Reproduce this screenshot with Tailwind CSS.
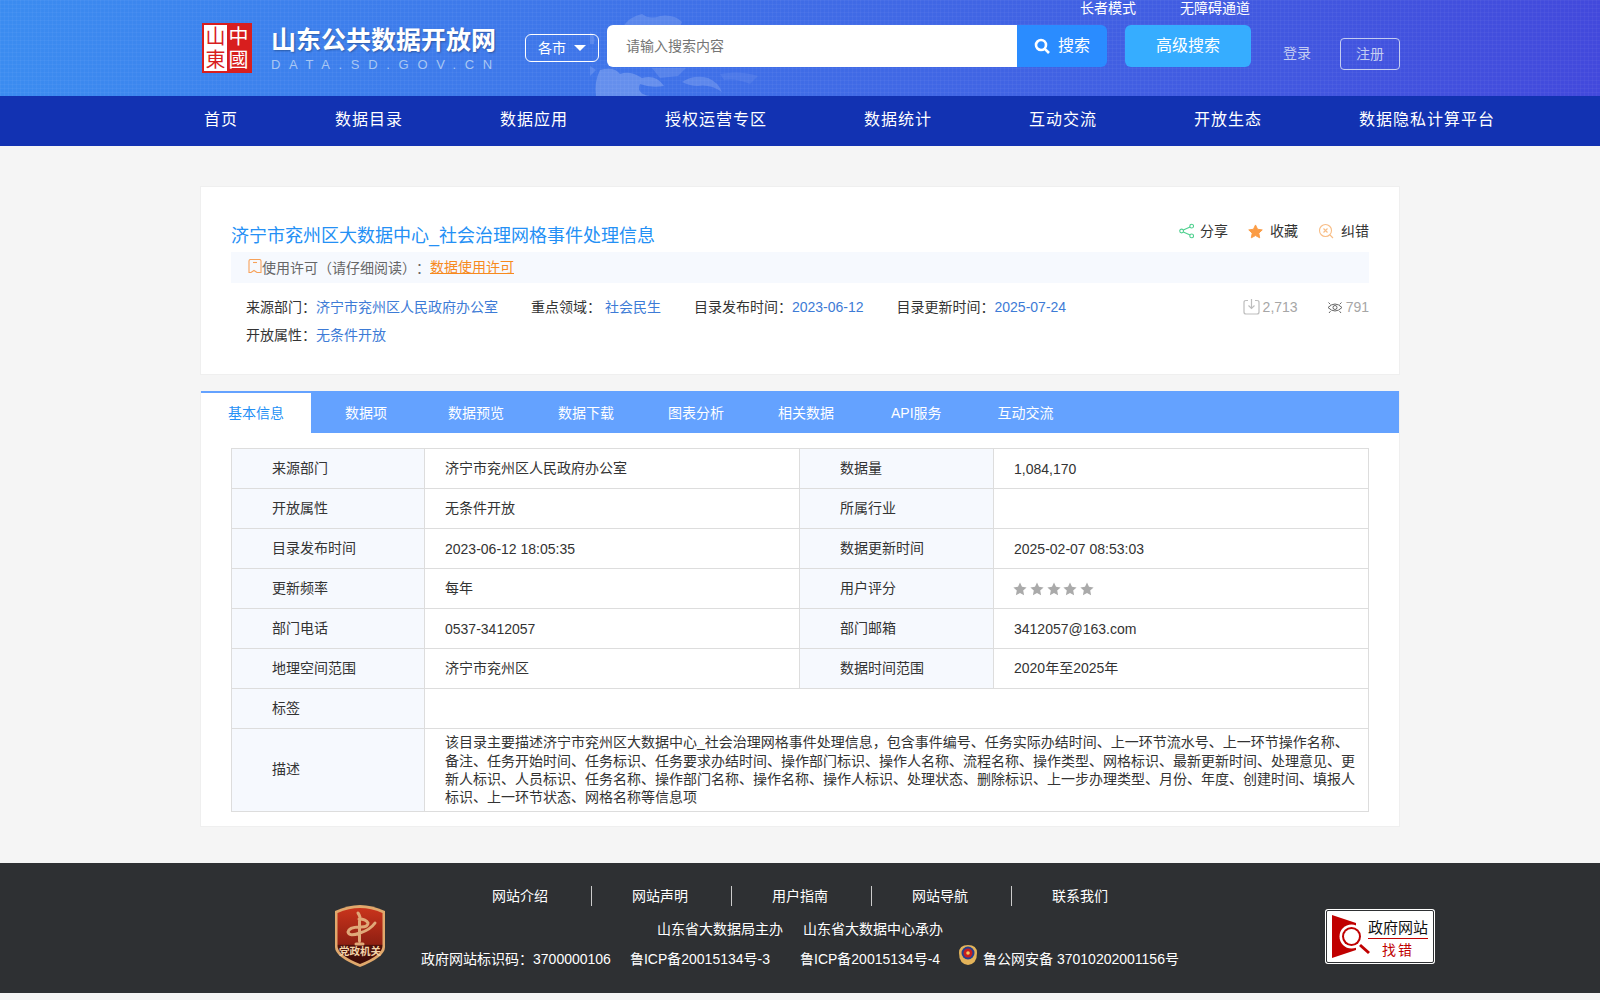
<!DOCTYPE html>
<html lang="zh-CN">
<head>
    <meta charset="UTF-8">
    <title>山东公共数据开放网</title>
    <script src="https://cdn.jsdelivr.net/npm/@tailwindcss/browser@4"></script>
</head>
<body class="bg-[#f5f5f5] text-[14px] text-[#333] [text-spacing-trim:space-all] font-['Liberation_Sans','Noto_Sans_CJK_SC',sans-serif]">
    <!-- header -->
    <header class="relative h-[96px] overflow-hidden bg-gradient-to-r from-[#3b8cf0] to-[#4249dc]">
        <div class="absolute inset-0 bg-[linear-gradient(rgba(255,255,255,.035)_1px,transparent_1px),linear-gradient(90deg,rgba(255,255,255,.035)_1px,transparent_1px)] bg-[length:4px_4px]"></div>
        <!-- faint map behind the search box -->
        <svg class="absolute left-[590px] top-[8px]" width="220" height="88" viewBox="0 0 220 88" fill="#fff">
            <path d="M32 20 Q40 8 52 6 Q60 12 70 8 Q84 6 92 14 Q90 22 78 24 L36 26 Z" opacity=".15"/>
            <path d="M10 62 Q24 58 30 66 Q40 62 52 70 Q66 66 74 78 Q60 80 50 76 Q46 86 60 88 L6 88 Q4 74 10 62 Z" opacity=".2"/>
            <path d="M92 74 Q104 66 118 70 Q128 74 132 84 Q120 76 108 78 Q100 78 92 74 Z" opacity=".16"/>
            <path d="M62 60 L96 60 L88 68 L70 70 Z" opacity=".12"/>
            <path d="M130 66 Q150 62 168 68 L160 76 Q146 70 134 72 Z" opacity=".07"/>
            <path d="M0 24 Q6 28 4 36 L0 36 Z M0 58 L6 62 L0 68 Z" opacity=".14"/>
        </svg>
        <div class="relative w-[1200px] mx-auto h-full">
            <div class="absolute right-[150px] top-0 flex gap-[44px] text-white leading-[17px]">
                <a>长者模式</a>
                <a>无障碍通道</a>
            </div>
            <div class="flex items-start pt-[25px]">
                <!-- logo -->
                <div class="shrink-0 w-[50px] h-[50px] mt-[-2px] ml-[2px] p-[2px] grid grid-cols-2 grid-rows-2 bg-[#d81e1e] text-[20px] leading-none text-center">
                    <span class="flex items-center justify-center bg-white text-[#d81e1e]">山</span>
                    <span class="flex items-center justify-center text-white">中</span>
                    <span class="flex items-center justify-center bg-white text-[#d81e1e]">東</span>
                    <span class="flex items-center justify-center text-white">國</span>
                </div>
                <div class="shrink-0 ml-[19px] w-[229px] mt-[1px]">
                    <div class="text-[25px] leading-[28px] font-bold text-white whitespace-nowrap [text-shadow:1px_1px_2px_rgba(0,0,0,.3)]">山东公共数据开放网</div>
                    <div class="text-[13px] leading-[16px] mt-[3px] text-[#a9c7f3] tracking-[8.7px] whitespace-nowrap">DATA.SD.GOV.CN</div>
                </div>
                <div class="shrink-0 ml-[25px] mt-[9px] w-[74px] h-[28px] rounded-[6px] border border-white text-white flex items-center justify-center gap-[8px]">
                    <span>各市</span>
                    <span class="w-0 h-0 border-x-[6px] border-x-transparent border-t-[6px] border-t-white"></span>
                </div>
                <div class="shrink-0 ml-[8px] w-[410px] h-[42px] bg-white rounded-l-[6px] pl-[19px] flex items-center text-[#757575]">请输入搜索内容</div>
                <button class="shrink-0 w-[90px] h-[42px] bg-[#2a8cff] rounded-r-[6px] text-white text-[16px] flex items-center justify-center gap-[8px]">
                    <svg width="16" height="16" viewBox="0 0 16 16" fill="none" stroke="#fff" stroke-width="2.6"><circle cx="7" cy="7" r="5"/><path d="M10.8 10.8 L15 15"/></svg>
                    <span>搜索</span>
                </button>
                <button class="shrink-0 ml-[18px] w-[126px] h-[42px] bg-[#36adff] rounded-[6px] text-white text-[16px]">高级搜索</button>
                <a class="shrink-0 whitespace-nowrap ml-[32px] mt-[14px] text-[#c4cdf2] leading-[28px]">登录</a>
                <a class="shrink-0 ml-[29px] mt-[13px] w-[60px] h-[32px] rounded-[4px] border border-[#c4cdf2] text-[#c4cdf2] flex items-center justify-center">注册</a>
            </div>
        </div>
    </header>
    <!-- nav -->
    <nav class="h-[50px] bg-[#1232b2] text-white">
        <ul class="w-[1200px] mx-auto pl-[4px] pb-[2px] h-full flex items-center gap-[97px] whitespace-nowrap text-[16px] tracking-[1px]">
            <li class="shrink-0">首页</li>
            <li class="shrink-0">数据目录</li>
            <li class="shrink-0">数据应用</li>
            <li class="shrink-0">授权运营专区</li>
            <li class="shrink-0">数据统计</li>
            <li class="shrink-0">互动交流</li>
            <li class="shrink-0">开放生态</li>
            <li class="shrink-0">数据隐私计算平台</li>
        </ul>
    </nav>

    <main class="w-[1200px] mx-auto pt-[40px]">
        <!-- summary card -->
        <section class="h-[189px] bg-white border border-[#efefef] px-[30px] pt-[35px]">
            <div class="flex justify-between items-start h-[30px]">
                <h1 class="text-[18px] leading-[28px] text-[#2490f5]">济宁市兖州区大数据中心_社会治理网格事件处理信息</h1>
                <div class="flex items-center gap-[20px] leading-[20px] -mt-[1px]">
                    <span class="flex items-center gap-[6px]">
                        <svg width="15" height="16" viewBox="0 0 16 16" fill="none" stroke="#4fd08f" stroke-width="1.2"><circle cx="13.5" cy="2.800" r="2"/><circle cx="2.800" cy="8" r="2"/><circle cx="13.5" cy="13.200" r="2"/><path d="M11.800 3.800 L4.600 7 M4.600 9 L11.800 12.200"/></svg>
                        分享
                    </span>
                    <span class="flex items-center gap-[7px]">
                        <svg width="15" height="15" viewBox="0 0 24 24" fill="#fb9c45" stroke="#fb9c45" stroke-width="1.500" stroke-linejoin="round"><path d="M12 1.500l3.300 6.900 7.500 1-5.500 5.200 1.400 7.500L12 18.500l-6.700 3.600 1.400-7.500L1.200 9.400l7.500-1z"/></svg>
                        收藏
                    </span>
                    <span class="flex items-center gap-[7px]">
                        <svg width="16" height="16" viewBox="0 0 16 16" fill="none" stroke="#f8bd85" stroke-width="1.100"><circle cx="7.500" cy="7.500" r="6"/><path d="M5.500 5.500l4 4m0-4l-4 4M12 12l3 3"/></svg>
                        纠错
                    </span>
                </div>
            </div>
            <div class="h-[31px] bg-[#f6f9fe] pl-[17px] flex items-center text-[#666]">
                <svg class="mb-[3px]" width="14" height="15" viewBox="0 0 14 15" fill="none" stroke="#f7a25a" stroke-width="1.100"><path d="M1 2q0-1.500 1.500-1.500h9q1.500 0 1.500 1.500v11.500h-4l-3-2-3 2h-2z"/><path d="M5 3.500h4"/></svg>
                <span>使用许可（请仔细阅读）<span class="font-['Noto_Sans_CJK_TC']">：</span></span><a class="text-[#f78a1e] underline">数据使用许可</a>
            </div>
            <div class="flex pl-[15px] mt-[13px] leading-[20px]">
                <span>来源部门<span class="font-['Noto_Sans_CJK_TC']">：</span><a class="text-[#3d7bd6]">济宁市兖州区人民政府办公室</a></span>
                <span class="ml-[33px]">重点领域<span class="font-['Noto_Sans_CJK_TC']">：</span> <a class="text-[#3d7bd6]">社会民生</a></span>
                <span class="ml-[33px]">目录发布时间<span class="font-['Noto_Sans_CJK_TC']">：</span><a class="text-[#3d7bd6]">2023-06-12</a></span>
                <span class="ml-[33px]">目录更新时间<span class="font-['Noto_Sans_CJK_TC']">：</span><a class="text-[#3d7bd6]">2025-07-24</a></span>
                <span class="ml-auto flex items-center gap-[3px] text-[#a6a6a6]">
                    <svg width="17" height="17" viewBox="0 0 17 17" fill="none" stroke="#bdbdbd" stroke-width="1.200"><path d="M5 2.500H3q-2 0-2 2v9.500q0 2 2 2h11q2 0 2-2V4.500q0-2-2-2h-2M8.500 1v9M5.500 7.500l3 3 3-3"/></svg>
                    2,713
                </span>
                <span class="ml-[29px] flex items-center gap-[3px] text-[#a6a6a6]">
                    <svg class="mt-[2px]" width="16" height="15" viewBox="0 0 16 15" fill="none" stroke="#666" stroke-width="1"><path d="M1 7.500Q8 .5 15 7.500 8 14.500 1 7.500Z"/><circle cx="8" cy="7.500" r="2"/><path d="M1.500 2.500l1.800 1.800M14.500 2.500l-1.800 1.800M2 13l1.500-1.800M14 13l-1.500-1.800"/></svg>
                    791
                </span>
            </div>
            <div class="pl-[15px] mt-[7px] leading-[20px]">开放属性<span class="font-['Noto_Sans_CJK_TC']">：</span><a class="text-[#3d7bd6]">无条件开放</a></div>
        </section>

        <!-- detail card -->
        <section class="mt-[16px] h-[436px] bg-white border-x border-b border-[#efefef]">
            <div class="h-[42px] bg-[#64a2ff] flex text-white">
                <a class="w-[110px] border-t-2 border-[#64a2ff] bg-white text-[#2490f5] flex items-center justify-center">基本信息</a>
                <div class="flex items-center gap-[54px] pl-[34px] pt-[2px]">
                    <a class="mr-[7px]">数据项</a>
                    <a>数据预览</a>
                    <a>数据下载</a>
                    <a>图表分析</a>
                    <a class="mr-[3px]">相关数据</a>
                    <a class="mr-[2px]">API服务</a>
                    <a>互动交流</a>
                </div>
            </div>
            <table class="ml-[30px] mt-[15px] w-[1137px] table-fixed border-collapse border border-[#ddd] leading-[18px]">
                <colgroup>
                    <col class="w-[193px]"><col class="w-[375px]"><col class="w-[194px]"><col class="w-[375px]">
                </colgroup>
                <tbody>
                    <tr class="h-[40px]">
                        <th class="font-normal text-left pl-[40px] pb-[2px] bg-[#f6f9fe] border border-[#ddd]">来源部门</th>
                        <td class="pl-[20px] pb-[2px] border border-[#ddd]">济宁市兖州区人民政府办公室</td>
                        <th class="font-normal text-left pl-[40px] pb-[2px] bg-[#f6f9fe] border border-[#ddd]">数据量</th>
                        <td class="pl-[20px] border border-[#ddd]">1,084,170</td>
                    </tr>
                    <tr class="h-[40px]">
                        <th class="font-normal text-left pl-[40px] pb-[2px] bg-[#f6f9fe] border border-[#ddd]">开放属性</th>
                        <td class="pl-[20px] pb-[2px] border border-[#ddd]">无条件开放</td>
                        <th class="font-normal text-left pl-[40px] pb-[2px] bg-[#f6f9fe] border border-[#ddd]">所属行业</th>
                        <td class="pl-[20px] border border-[#ddd]"></td>
                    </tr>
                    <tr class="h-[40px]">
                        <th class="font-normal text-left pl-[40px] pb-[2px] bg-[#f6f9fe] border border-[#ddd]">目录发布时间</th>
                        <td class="pl-[20px] border border-[#ddd]">2023-06-12 18:05:35</td>
                        <th class="font-normal text-left pl-[40px] pb-[2px] bg-[#f6f9fe] border border-[#ddd]">数据更新时间</th>
                        <td class="pl-[20px] border border-[#ddd]">2025-02-07 08:53:03</td>
                    </tr>
                    <tr class="h-[40px]">
                        <th class="font-normal text-left pl-[40px] pb-[2px] bg-[#f6f9fe] border border-[#ddd]">更新频率</th>
                        <td class="pl-[20px] pb-[2px] border border-[#ddd]">每年</td>
                        <th class="font-normal text-left pl-[40px] pb-[2px] bg-[#f6f9fe] border border-[#ddd]">用户评分</th>
                        <td class="pl-[20px] border border-[#ddd]">
                            <svg class="-ml-px" width="82" height="14" viewBox="0 0 82 14" fill="#aaa">
                                <path id="star" d="M7 0.500l2 4.300 4.600 .6-3.400 3.200 .9 4.600L7 10.900l-4.100 2.300 .9-4.600L.4 5.400 5 4.800z"/>
                                <use href="#star" x="17"/><use href="#star" x="34"/><use href="#star" x="50"/><use href="#star" x="67"/>
                            </svg>
                        </td>
                    </tr>
                    <tr class="h-[40px]">
                        <th class="font-normal text-left pl-[40px] pb-[2px] bg-[#f6f9fe] border border-[#ddd]">部门电话</th>
                        <td class="pl-[20px] border border-[#ddd]">0537-3412057</td>
                        <th class="font-normal text-left pl-[40px] pb-[2px] bg-[#f6f9fe] border border-[#ddd]">部门邮箱</th>
                        <td class="pl-[20px] border border-[#ddd]">3412057@163.com</td>
                    </tr>
                    <tr class="h-[40px]">
                        <th class="font-normal text-left pl-[40px] pb-[2px] bg-[#f6f9fe] border border-[#ddd]">地理空间范围</th>
                        <td class="pl-[20px] pb-[2px] border border-[#ddd]">济宁市兖州区</td>
                        <th class="font-normal text-left pl-[40px] pb-[2px] bg-[#f6f9fe] border border-[#ddd]">数据时间范围</th>
                        <td class="pl-[20px] pb-[2px] border border-[#ddd]">2020年至2025年</td>
                    </tr>
                    <tr class="h-[40px]">
                        <th class="font-normal text-left pl-[40px] pb-[2px] bg-[#f6f9fe] border border-[#ddd]">标签</th>
                        <td class="pl-[20px] border border-[#ddd]" colspan="3"></td>
                    </tr>
                    <tr class="h-[83px]">
                        <th class="font-normal text-left pl-[40px] pb-[2px] bg-[#f6f9fe] border border-[#ddd]">描述</th>
                        <td class="pl-[20px] pr-[10px] leading-[18.4px] border border-[#ddd]" colspan="3">该目录主要描述济宁市兖州区大数据中心_社会治理网格事件处理信息，包含事件编号、任务实际办结时间、上一环节流水号、上一环节操作名称、备注、任务开始时间、任务标识、任务要求办结时间、操作部门标识、操作人名称、流程名称、操作类型、网格标识、最新更新时间、处理意见、更新人标识、人员标识、任务名称、操作部门名称、操作名称、操作人标识、处理状态、删除标识、上一步办理类型、月份、年度、创建时间、填报人标识、上一环节状态、网格名称等信息项</td>
                    </tr>
                </tbody>
            </table>
        </section>
    </main>

    <!-- footer -->
    <footer class="relative mt-[36px] h-[130px] bg-[#2e3033] text-white">
        <svg class="absolute left-[334px] top-[42px]" width="52" height="62" viewBox="0 0 52 62">
            <defs>
                <linearGradient id="shield" x1="0" y1="0" x2="0" y2="1">
                    <stop offset="0" stop-color="#c9341c"/>
                    <stop offset=".65" stop-color="#8e1f12"/>
                    <stop offset=".66" stop-color="#4e100a"/>
                    <stop offset="1" stop-color="#3e0c08"/>
                </linearGradient>
            </defs>
            <path d="M1 6 Q14 0 26 0 Q38 0 51 6 V42 Q51 52 26 62 Q1 52 1 42 Z" fill="#e0a86c"/>
            <path d="M3.500 8 Q15 3 26 3 Q37 3 48.500 8 V41 Q48.500 50 26 59 Q3.500 50 3.500 41 Z" fill="url(#shield)"/>
            <path d="M24 8 Q27 12 25.500 16 V36 M22 39 H29 M25.500 22 Q15 22 14 27 Q15 32 26 28 Q36 25 41 18 M25 14 Q32 14 34 18 Q34 22 27 22" fill="none" stroke="#e0a878" stroke-width="3" stroke-linecap="round"/>
            <text x="26" y="50" text-anchor="middle" font-size="10.500" font-weight="700" fill="#f3d3a8">党政机关</text>
        </svg>
        <div class="flex justify-center pt-[23px] leading-[20px]">
            <a class="pr-[43px]">网站介绍</a>
            <a class="pl-[40px] pr-[43px] border-l border-[#ccc]">网站声明</a>
            <a class="pl-[40px] pr-[43px] border-l border-[#ccc]">用户指南</a>
            <a class="pl-[40px] pr-[43px] border-l border-[#ccc]">网站导航</a>
            <a class="pl-[40px] border-l border-[#ccc]">联系我们</a>
        </div>
        <div class="flex justify-center gap-[20px] mt-[13px] leading-[20px]">
            <span>山东省大数据局主办</span>
            <span>山东省大数据中心承办</span>
        </div>
        <div class="flex justify-center items-center mt-[5px] leading-[20px]">
            <span>政府网站标识码<span class="font-['Noto_Sans_CJK_TC']">：</span>3700000106</span>
            <span class="ml-[19px]">鲁ICP备20015134号-3</span>
            <span class="ml-[30px]">鲁ICP备20015134号-4</span>
            <svg class="ml-[18px] mb-[7px]" width="20" height="22" viewBox="0 0 20 22">
                <path d="M1 9 Q1 20 10 21 Q19 20 19 9 Q19 1 10 1 Q1 1 1 9Z" fill="#e3b35a"/>
                <circle cx="10" cy="9" r="6.500" fill="#26408f"/>
                <circle cx="10" cy="9" r="4.500" fill="#c81e1e"/>
                <circle cx="10" cy="9" r="1.800" fill="#f0c860"/>
            </svg>
            <span class="ml-[5px]">鲁公网安备 37010202001156号</span>
        </div>
        <div class="absolute left-[1325px] top-[46px] w-[110px] h-[55px] bg-white rounded-[3px] border-[3px] border-white flex items-center text-[#111] outline outline-1 -outline-offset-2 outline-[#2e3033]">
            <svg class="ml-[4px] shrink-0 -mr-[2px]" width="38" height="43" viewBox="0 0 38 43">
                <path d="M0 0 L24 8 V35 L0 43 Z" fill="#c00000"/>
                <circle cx="19.500" cy="21.500" r="12" fill="#fff"/>
                <circle cx="19.500" cy="21.500" r="9.500" fill="#c00000"/>
                <circle cx="19.500" cy="21.500" r="7.500" fill="#fff"/>
                <path d="M28 30 L37 38" stroke="#c00000" stroke-width="3"/>
            </svg>
            <div class="text-center w-[60px] mt-[4px]">
                <div class="text-[15px] leading-[18px] whitespace-nowrap border-b border-[#c00000] pb-[1px]">政府网站</div>
                <div class="text-[14px] leading-[18px] text-[#c00000] tracking-[2px] pt-[2px]">找错</div>
            </div>
        </div>
    </footer>
</body>
</html>
